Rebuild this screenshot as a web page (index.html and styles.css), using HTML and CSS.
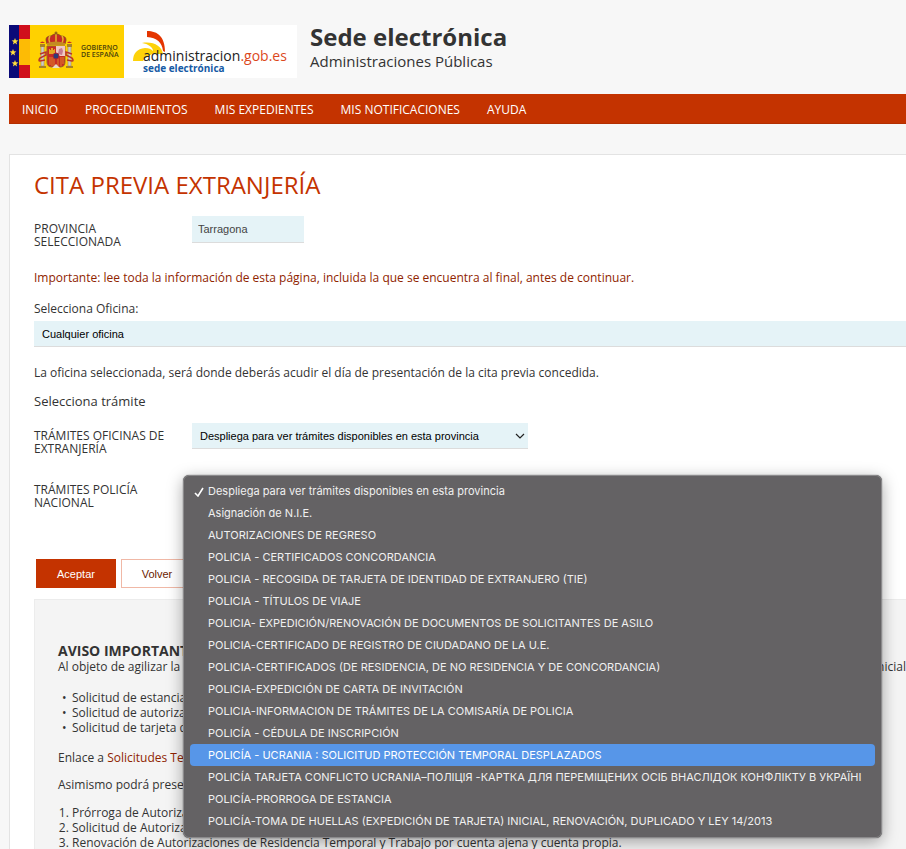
FILE: index.html
```html
<!DOCTYPE html>
<html lang="es">
<head>
  <meta charset="UTF-8" />
  <meta name="viewport" content="width=device-width, initial-scale=1.0"/>
  <title>Cita previa extranjería - Sede electrónica</title>
  <link rel="stylesheet" href="styles.css">
</head>
<body>

  <!-- CABECERA -->
  <header class="header">
    <svg class="logo" viewBox="0 0 288 53" width="288" height="53" role="img" aria-label="Gobierno de España, administracion.gob.es">
      <rect width="288" height="53" fill="#fff"/>
      <rect width="115" height="53" fill="#ffd100"/>
      <rect width="11" height="53" fill="#0a0a78"/>
      <rect x="10" width="11" height="14" fill="#d00f1c"/>
      <rect x="10" y="14" width="11" height="26" fill="#fdbb05"/>
      <rect x="10" y="40" width="11" height="13" fill="#d00f1c"/>
      <g fill="#ffe03c">
        <path id="star" d="M6 13l.9 2.300 2.500.1-2 1.600.7 2.400L6 18l-2.100 1.400.7-2.400-2-1.600 2.500-.1z"/>
        <use href="#star" x="-2" y="11"/>
        <use href="#star" y="22"/>
      </g>
      <!-- escudo -->
      <g>
        <path d="M37 15q0-4 5-4 2-2 5-2t5 2q5 0 5 4l-1 4H38z" fill="#c52a24" stroke="#7d4a19" stroke-width=".8"/>
        <path d="M47 9v9M41 11q-2 3 0 7M53 11q2 3 0 7" stroke="#e9b329" fill="none" stroke-width="1.500"/>
        <path d="M45.500 8h3M47 6.500v3" stroke="#7d4a19"/>
        <path d="M38 18q9-3 18 0v2H38z" fill="#c48a22"/>
        <path d="M38 21h18v16q0 5-5 5h-8q-5 0-5-5z" fill="#c92b26" stroke="#9b6b25"/>
        <path d="M47 21h9v10h-9z" fill="#efc9c4"/>
        <path d="M49 29l1-5 3-1 1 3-1 4z" fill="#c77a91"/>
        <path d="M40 29v-5h1v1h1v-2h2v2h1v-1h1v5z" fill="#e4a822"/>
        <path d="M41 32v8M43 32v9M45 32v9M49 32v9M52 32v9M54 32v7" stroke="#e5a02a" stroke-width=".8"/>
        <path d="M43 43l4-4 4 4z" fill="#e9d9c6"/>
        <circle cx="47" cy="31" r="3" fill="#303c78" stroke="#a92735"/>
        <path d="M32 21h3v20h-3zM59 21h3v20h-3z" fill="#cfcac3" stroke="#998c75" stroke-width=".6"/>
        <path d="M31 19h5v3h-5zM58 19h5v3h-5zM30 41h7v2h-7zM57 41h7v2h-7z" fill="#a88125"/>
        <path d="M31 18q2-3 5 0zM58 18q2-3 5 0z" fill="#c92b26"/>
        <path d="M31 29l6-2v3l-6 3q-2 3 0 3l5-1M63 29l-6-2v3l6 3q2 3 0 3l-5-1" fill="none" stroke="#bb332a" stroke-width="1.500"/>
      </g>
      <g class="logo-gob">
        <text x="72" y="25">GOBIERNO</text>
        <text x="72" y="32">DE ESPAÑA</text>
      </g>
      <path d="M138 6c11 0 18 6 18 21l-2-1c-1-9-6-13-16-14z" fill="#e43500"/>
      <path d="M133 18c11-2 20 3 21 11h-11c-3 2-7 3-9 7h-10c0-8 4-12 12-13 4 0 6 1 8 3 0-4-5-7-11-8z" fill="#fdd20a"/>
      <text class="logo-name" x="134" y="36">administracion<tspan fill="#dc481c">.gob.es</tspan></text>
      <text class="logo-sub" x="134" y="47">sede electrónica</text>
    </svg>
    <div class="site-title">
      <strong>Sede electrónica</strong>
      <span>Administraciones Públicas</span>
    </div>
  </header>

  <nav class="nav">
    <a href="#">INICIO</a>
    <a href="#">PROCEDIMIENTOS</a>
    <a href="#">MIS EXPEDIENTES</a>
    <a href="#">MIS NOTIFICACIONES</a>
    <a href="#">AYUDA</a>
  </nav>

  <!-- CONTENIDO -->
  <main class="panel">
    <h1>CITA PREVIA EXTRANJERÍA</h1>

    <form>
      <div class="row">
        <label for="provincia">PROVINCIA SELECCIONADA</label>
        <input type="text" id="provincia" class="provincia" value="Tarragona" readonly />
      </div>

      <p class="important">Importante: lee toda la información de esta página, incluida la que se encuentra al final, antes de continuar.</p>

      <label class="office-label" for="oficina">Selecciona Oficina:</label>
      <select id="oficina">
        <option>Cualquier oficina</option>
      </select>
      <p class="office-note">La oficina seleccionada, será donde deberás acudir el día de presentación de la cita previa concedida.</p>

      <h2>Selecciona trámite</h2>

      <div class="row">
        <label for="tramite-oficina">TRÁMITES OFICINAS DE EXTRANJERÍA</label>
        <div class="field">
          <select id="tramite-oficina">
            <option>Despliega para ver trámites disponibles en esta provincia</option>
          </select>
          <svg class="chevron" viewBox="0 0 10 6" width="10" height="6"><path d="M1 1l4 4 4-4" fill="none" stroke="#222" stroke-width="1.200"/></svg>
        </div>
      </div>

      <div class="row">
        <label for="tramite-policia">TRÁMITES POLICÍA NACIONAL</label>
        <div class="field">
          <select id="tramite-policia">
            <option>Despliega para ver trámites disponibles en esta provincia</option>
          </select>
          <div class="menu" role="listbox" aria-label="Trámites Policía Nacional">
            <button type="button" role="option" aria-selected="true"><svg class="check" viewBox="0 0 10 10" width="10" height="10"><path d="M1 6l3 3 5-8" fill="none" stroke="#fff" stroke-width="1.600"/></svg>Despliega para ver trámites disponibles en esta provincia</button>
            <button type="button" role="option">Asignación de N.I.E.</button>
            <button type="button" role="option">AUTORIZACIONES DE REGRESO</button>
            <button type="button" role="option">POLICIA - CERTIFICADOS CONCORDANCIA</button>
            <button type="button" role="option">POLICIA - RECOGIDA DE TARJETA DE IDENTIDAD DE EXTRANJERO (TIE)</button>
            <button type="button" role="option">POLICIA - TÍTULOS DE VIAJE</button>
            <button type="button" role="option">POLICIA- EXPEDICIÓN/RENOVACIÓN DE DOCUMENTOS DE SOLICITANTES DE ASILO</button>
            <button type="button" role="option">POLICIA-CERTIFICADO DE REGISTRO DE CIUDADANO DE LA U.E.</button>
            <button type="button" role="option">POLICIA-CERTIFICADOS (DE RESIDENCIA, DE NO RESIDENCIA Y DE CONCORDANCIA)</button>
            <button type="button" role="option">POLICIA-EXPEDICIÓN DE CARTA DE INVITACIÓN</button>
            <button type="button" role="option">POLICIA-INFORMACION DE TRÁMITES DE LA COMISARÍA DE POLICIA</button>
            <button type="button" role="option">POLICÍA - CÉDULA DE INSCRIPCIÓN</button>
            <button type="button" role="option" class="active">POLICÍA - UCRANIA : SOLICITUD PROTECCIÓN TEMPORAL DESPLAZADOS</button>
            <button type="button" role="option">POLICÍA TARJETA CONFLICTO UCRANIA–ПОЛІЦІЯ -КАРТКА ДЛЯ ПЕРЕМІЩЕНИХ ОСІБ ВНАСЛІДОК КОНФЛІКТУ В УКРАЇНІ</button>
            <button type="button" role="option">POLICÍA-PRORROGA DE ESTANCIA</button>
            <button type="button" role="option">POLICÍA-TOMA DE HUELLAS (EXPEDICIÓN DE TARJETA) INICIAL, RENOVACIÓN, DUPLICADO Y LEY 14/2013</button>
          </div>
        </div>
      </div>

      <div class="actions">
        <button type="submit" class="btn btn-primary">Aceptar</button>
        <button type="button" class="btn">Volver</button>
      </div>
    </form>

    <section class="notice">
      <h3>AVISO IMPORTANTE</h3>
      <p class="split"><span>Al objeto de agilizar la</span> <span>inicial</span></p>
      <ul>
        <li>Solicitud de estancia</li>
        <li>Solicitud de autorización</li>
        <li>Solicitud de tarjeta de</li>
      </ul>
      <p>Enlace a <a href="#">Solicitudes Telemáticas</a></p>
      <p>Asimismo podrá presentar</p>
      <ol>
        <li>Prórroga de Autorización</li>
        <li>Solicitud de Autorización</li>
        <li>Renovación de Autorizaciones de Residencia Temporal y Trabajo por cuenta ajena y cuenta propia.</li>
      </ol>
    </section>
  </main>

</body>
</html>
```

FILE: styles.css
```css
* {
  box-sizing: border-box;
}

body {
  font-family: "Open Sans", "Noto Sans", sans-serif;
  font-size: 12px;
  line-height: 15px;
  color: #333;
  background: #f7f7f7;
  margin: 0;
  padding: 25px 0 0 9px;
  overflow: hidden;
}

h1, h2, h3, p, ul, ol {
  margin: 0;
}

button, input, select {
  font-family: "Liberation Sans", Arial, sans-serif;
  font-size: 11px;
  border: none;
  border-radius: 0;
}

/* cabecera */
.header {
  display: flex;
  gap: 13px;
  margin-bottom: 16px;
}

.logo {
  flex: none;
}

.logo-gob {
  font: 600 7px "Open Sans", sans-serif;
  fill: #4c430b;
}

.logo-name {
  font: 14px "Open Sans", sans-serif;
  fill: #222;
}

.logo-sub {
  font: bold 10px "Open Sans", sans-serif;
  fill: #165aa5;
}

.site-title {
  display: flex;
  flex-direction: column;
}

.site-title strong {
  font-size: 24px;
  line-height: 24px;
}

.site-title span {
  font-size: 15px;
  line-height: 24px;
}

.nav {
  display: flex;
  gap: 27px;
  padding: 0 13px;
  line-height: 31px;
  background: #c43300;
  border-bottom: 1px solid #b32f00;
  height: 30px;
}

.nav a {
  font-size: 12px;
  color: #fff;
  text-decoration: none;
}

/* contenido */
.panel {
  margin-top: 30px;
  padding: 15px 0 0 24px;
  background: #fff;
  border: 1px solid #e3e3e3;
  border-right: none;
}

h1 {
  font-size: 24px;
  font-weight: normal;
  line-height: 30px;
  color: #c43300;
  margin-bottom: 16px;
}

.row {
  display: grid;
  grid-template-columns: 136px 336px;
  column-gap: 22px;
  align-items: start;
  min-height: 54px;
}

.row label {
  padding-top: 6px;
  line-height: 13px;
}

.provincia {
  width: 112px;
  height: 27px;
  padding: 0 6px;
  color: #444;
  background: #e5f3f7;
  border-bottom: 1px solid #dcdcdc;
}

.important {
  color: #8f2400;
  margin-bottom: 16px;
}

.office-label {
  display: block;
  margin-bottom: 5px;
}

select {
  display: block;
  appearance: none;
  width: 100%;
  height: 26px;
  padding: 0 8px;
  color: #000;
  background: #e5f3f7;
  border-bottom: 1px solid #dcdcdc;
}

.office-note {
  margin: 18px 0 11px;
}

h2 {
  font-size: 13px;
  font-weight: normal;
  line-height: 20px;
  margin-bottom: 12px;
}

.field {
  position: relative;
}

.chevron {
  position: absolute;
  right: 3px;
  top: 10px;
  pointer-events: none;
}

/* lista desplegada */
.menu {
  position: absolute;
  left: -9px;
  top: -2px;
  z-index: 2;
  width: 699px;
  padding: 4px 6px 5px;
  background: #646264;
  border: 1px solid #8b8a8c;
  border-radius: 6px;
  box-shadow: 0 0 1px #222, 0 4px 16px rgba(0,0,0,0.35);
}

.menu button {
  position: relative;
  display: block;
  width: 100%;
  height: 22px;
  padding: 0 18px;
  font-family: Inter, sans-serif;
  font-size: 11px;
  text-align: left;
  white-space: nowrap;
  color: #f0f0f0;
  background: none;
  border-radius: 4px;
}

.menu .active {
  color: #fff;
  background: #5796e8;
}

.check {
  position: absolute;
  left: 4px;
  top: 7px;
}

.actions {
  display: flex;
  gap: 5px;
  padding: 28px 2px 11px;
}

.btn {
  width: 72px;
  height: 29px;
  color: #6b1c00;
  background: #fff;
  border: 1px solid #f0b8a6;
}

.btn-primary {
  width: 80px;
  color: #fff;
  background: #c43300;
  border-color: #c43300;
}

/* aviso */
.notice {
  padding: 42px 0 0 23px;
  background: #f4f4f4;
  border: 1px solid #ececec;
  border-right: none;
}

.notice h3 {
  font-size: 14px;
  line-height: 17px;
}

.notice p {
  margin-bottom: 12px;
}

.split {
  display: flex;
  justify-content: space-between;
}

.notice ul {
  list-style: none;
  padding-left: 4px;
  margin: 16px 0 15px;
}

.notice ul li::before {
  content: "•";
  display: inline-block;
  width: 10px;
}

.notice ol {
  padding-left: 14px;
  margin-top: 13px;
}

.notice a {
  color: #8f2400;
  text-decoration: none;
}
```
